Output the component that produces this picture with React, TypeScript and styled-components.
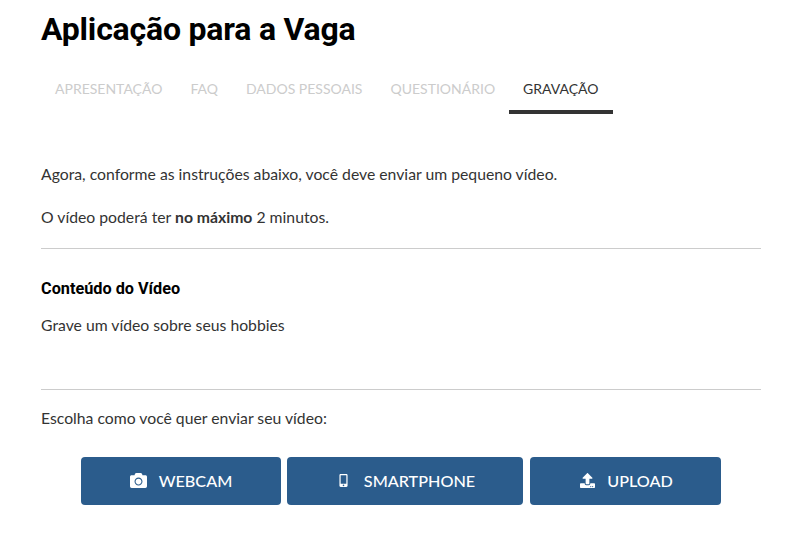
import React from 'react';
import styled, { createGlobalStyle } from 'styled-components';
import { FaCamera, FaMobileAlt, FaUpload } from 'react-icons/fa';

const GlobalStyle = createGlobalStyle`
  html, body {
    margin: 0;
    padding: 0;
    background: #fff;
    font-family: Lato, "Liberation Sans", sans-serif;
    color: #333;
  }
`;

const tabs = ['APRESENTAÇÃO', 'FAQ', 'DADOS PESSOAIS', 'QUESTIONÁRIO', 'GRAVAÇÃO'];

const App = () => {
  return (
    <Page>
      <GlobalStyle />
      <Title>Aplicação para a Vaga</Title>
      <Tabs>
        {tabs.map((tab) => (
          <Tab key={tab} $active={tab === 'GRAVAÇÃO'}>{tab}</Tab>
        ))}
      </Tabs>
      <Intro>Agora, conforme as instruções abaixo, você deve enviar um pequeno vídeo.</Intro>
      <Limit>O vídeo poderá ter <strong>no máximo</strong> 2 minutos.</Limit>
      <Divider />
      <Subtitle>Conteúdo do Vídeo</Subtitle>
      <Theme>Grave um vídeo sobre seus hobbies</Theme>
      <Divider />
      <Choose>Escolha como você quer enviar seu vídeo:</Choose>
      <Buttons>
        <SendButton $width={200}><IconSlot><FaCamera size={17} /></IconSlot>WEBCAM</SendButton>
        <SendButton $width={236}><IconSlot><FaMobileAlt size={13} /></IconSlot>SMARTPHONE</SendButton>
        <SendButton $width={191}><IconSlot><FaUpload size={15} /></IconSlot>UPLOAD</SendButton>
      </Buttons>
    </Page>
  );
};

export default App;

const Page = styled.div`
  width: 720px;
  margin-left: 41px;
  padding-top: 9px;
`;

const Title = styled.h1`
  margin: 0;
  font-family: Roboto, sans-serif;
  font-size: 32px;
  line-height: 40px;
  font-weight: 700;
  letter-spacing: -0.2px;
  color: #000;
`;

const Tabs = styled.div`
  display: flex;
  margin-top: 19px;
`;

const Tab = styled.div<{ $active?: boolean }>`
  padding: 11px 14px 11px;
  font-size: 14px;
  line-height: 20px;
  color: ${(p) => (p.$active ? '#333' : '#ccc')};
  border-bottom: 4px solid ${(p) => (p.$active ? '#333' : 'transparent')};
`;

const Intro = styled.p`
  margin: 49px 0 0;
  font-size: 15.75px;
  line-height: 22px;
`;

const Limit = styled.p`
  margin: 21px 0 0;
  font-size: 15.75px;
  line-height: 22px;
`;

const Divider = styled.hr`
  margin: 20px 0 0;
  border: 0;
  border-top: 1px solid #ccc;
`;

const Subtitle = styled.h4`
  margin: 30px 0 0;
  font-family: Roboto, sans-serif;
  font-size: 16.25px;
  line-height: 20px;
  font-weight: 700;
  color: #000;
`;

const Theme = styled.p`
  margin: 15px 0 53px;
  font-size: 15.75px;
  line-height: 22px;
`;

const Choose = styled.p`
  margin: 17px 0 0;
  font-size: 15.75px;
  line-height: 22px;
`;

const Buttons = styled.div`
  display: flex;
  gap: 6px;
  margin: 28px 0 0 40px;

  & > :last-child {
    margin-left: 1px;
  }
`;

const SendButton = styled.button<{ $width: number }>`
  display: flex;
  align-items: center;
  justify-content: center;
  gap: 11px;
  width: ${(p) => p.$width}px;
  height: 48px;
  padding: 0 0 2px;
  border: 0;
  border-radius: 4px;
  background: #2b5c8c;
  color: #fff;
  font-family: Lato, sans-serif;
  font-size: 16.2px;
  font-weight: 500;
`;

const IconSlot = styled.span`
  display: flex;
  justify-content: center;
  width: 18px;
`;
